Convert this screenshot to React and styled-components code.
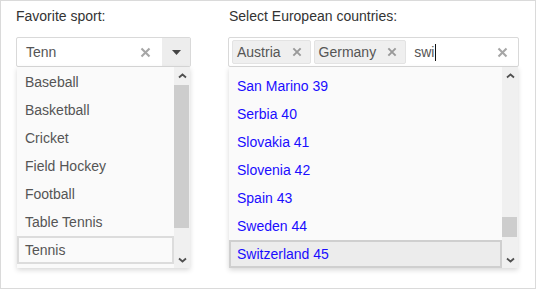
import React from 'react';
import styled, { createGlobalStyle } from 'styled-components';

const GlobalStyle = createGlobalStyle`
  body {
    margin: 0;
    background: #fff;
    font-family: 'Liberation Sans', Arial, sans-serif;
  }
`;

const Frame = styled.div`
  box-sizing: border-box;
  width: 536px;
  height: 289px;
  border: 1px solid #dadada;
  padding: 7px 0 0 15px;
  display: flex;
  gap: 37px;
`;

const Field = styled.div`
  width: ${p => p.width}px;
  display: flex;
  flex-direction: column;
`;

const Label = styled.div`
  font-size: 14px;
  line-height: 16px;
  color: #333;
  margin-bottom: 13px;
  padding-left: ${p => p.indent || 0}px;
`;

const Combo = styled.div`
  box-sizing: border-box;
  height: 30px;
  border: 1px solid #d9d9d9;
  border-radius: 2px;
  background: #fff;
  display: flex;
  align-items: center;
  padding-left: ${p => p.pad}px;
  padding-right: ${p => p.padRight || 0}px;
`;

const InputText = styled.div`
  flex: 1;
  font-size: 14px;
  line-height: 16px;
  color: #555;
  display: flex;
  align-items: center;
`;

const Caret = styled.span`
  display: inline-block;
  width: 1px;
  height: 17px;
  background: #111;
  margin-left: 1px;
`;

const ClearIcon = styled.svg`
  flex: none;
  margin-right: ${p => p.gap || 0}px;
`;

const DropButton = styled.div`
  width: 28px;
  align-self: stretch;
  background: #ededed;
  display: flex;
  align-items: center;
  justify-content: center;
`;

const Tag = styled.div`
  box-sizing: border-box;
  height: 24px;
  border: 1px solid #e3e3e3;
  border-radius: 2px;
  background: #efefef;
  display: flex;
  align-items: center;
  padding: 0 8px 0 4px;
  margin-right: 3px;
  font-size: 14px;
  color: #555;
  gap: 11px;
`;

const TagText = styled.span`
  line-height: 16px;
`;

const Search = styled(InputText)`
  margin-left: 5px;
`;

const List = styled.div`
  margin: 0 1px;
  height: 201px;
  display: flex;
  background: #fafafa;
  box-shadow: 0 2px 5px rgba(0, 0, 0, 0.16);
  overflow: hidden;
`;

const Items = styled.div`
  flex: 1;
  padding-top: ${p => p.offset}px;
  overflow: hidden;
`;

const Item = styled.div`
  box-sizing: border-box;
  height: 28px;
  line-height: 24px;
  border: 2px solid ${p => (p.active ? p.ring : 'transparent')};
  background: ${p => (p.active && p.fill ? p.fill : 'transparent')};
  padding-left: 6px;
  font-size: 14px;
  color: ${p => p.color};
  white-space: nowrap;
`;

const Scrollbar = styled.div`
  width: 16px;
  flex: none;
  display: flex;
  flex-direction: column;
  background: #f0f0f0;
`;

const ScrollButton = styled.div`
  height: 17px;
  flex: none;
  display: flex;
  align-items: center;
  justify-content: center;
`;

const Track = styled.div`
  flex: 1;
  display: flex;
  flex-direction: column;
`;

const Thumb = styled.div`
  margin-top: ${p => p.top}px;
  height: ${p => p.size}px;
  width: 15px;
  background: #cdcdcd;
`;

const Cross = ({ size = 11, color = '#a6a6a6', gap }) => (
  <ClearIcon width={size} height={size} viewBox="0 0 11 11" gap={gap}>
    <path d="M1.5 1.5 L9.5 9.5 M9.5 1.5 L1.5 9.5" stroke={color} strokeWidth="2.1" fill="none" />
  </ClearIcon>
);

const Chevron = ({ down }) => (
  <svg width="9" height="6" viewBox="0 0 9 6">
    <polyline
      points={down ? '1,1.5 4.5,4.5 8,1.5' : '1,4.5 4.5,1.5 8,4.5'}
      stroke="#4f4f4f"
      strokeWidth="1.8"
      fill="none"
    />
  </svg>
);

const FakeScrollbar = ({ top, size }) => (
  <Scrollbar>
    <ScrollButton>
      <Chevron />
    </ScrollButton>
    <Track>
      <Thumb top={top} size={size} />
    </Track>
    <ScrollButton>
      <Chevron down />
    </ScrollButton>
  </Scrollbar>
);

const sports = ['Baseball', 'Basketball', 'Cricket', 'Field Hockey', 'Football', 'Table Tennis', 'Tennis'];

const countries = [
  'San Marino 39',
  'Serbia 40',
  'Slovakia 41',
  'Slovenia 42',
  'Spain 43',
  'Sweden 44',
  'Switzerland 45',
];

export default function App() {
  return (
    <>
      <GlobalStyle />
      <Frame>
        <Field width={175}>
          <Label>Favorite sport:</Label>
          <Combo pad={9}>
            <InputText>Tenn</InputText>
            <Cross gap={11} />
            <DropButton>
              <svg width="9" height="5" viewBox="0 0 9 5">
                <polygon points="0,0 9,0 4.5,5" fill="#444" />
              </svg>
            </DropButton>
          </Combo>
          <List>
            <Items offset={1}>
              {sports.map(s => (
                <Item key={s} color="#555" ring="#dcdcdc" active={s === 'Tennis'}>
                  {s}
                </Item>
              ))}
            </Items>
            <FakeScrollbar top={1} size={143} />
          </List>
        </Field>

        <Field width={291}>
          <Label indent={1}>Select European countries:</Label>
          <Combo pad={3} padRight={10}>
            <Tag>
              <TagText>Austria</TagText>
              <Cross size={10} color="#999" />
            </Tag>
            <Tag>
              <TagText>Germany</TagText>
              <Cross size={10} color="#999" />
            </Tag>
            <Search>
              swi
              <Caret />
            </Search>
            <Cross />
          </Combo>
          <List>
            <Items offset={5}>
              {countries.map(c => (
                <Item
                  key={c}
                  color="#1a0dff"
                  ring="#cfcfcf"
                  fill="#ececec"
                  active={c === 'Switzerland 45'}
                >
                  {c}
                </Item>
              ))}
            </Items>
            <FakeScrollbar top={133} size={20} />
          </List>
        </Field>
      </Frame>
    </>
  );
}
